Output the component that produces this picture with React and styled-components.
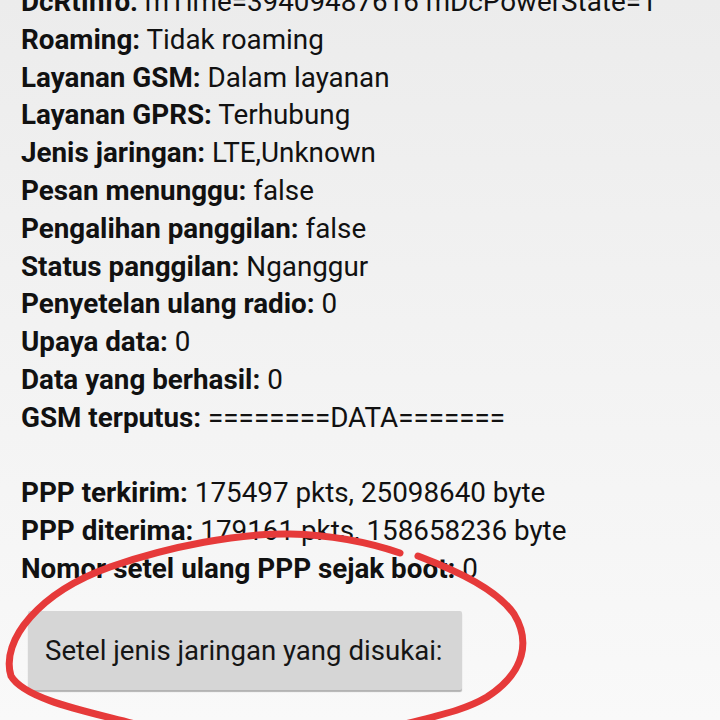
import styled, { createGlobalStyle } from "styled-components";

const GlobalStyle = createGlobalStyle`
  html, body {
    margin: 0;
    padding: 0;
  }
  body {
    width: 720px;
    height: 720px;
    overflow: hidden;
    background: linear-gradient(#ececec, #f4f4f4 60%, #f9f9f9);
    font-family: Roboto, "Noto Sans", sans-serif;
    color: #111;
  }
`;

const rows = [
  ["DcRtInfo:", "mTime=39409487616 mDcPowerState=1"],
  ["Roaming:", "Tidak roaming"],
  ["Layanan GSM:", "Dalam layanan"],
  ["Layanan GPRS:", "Terhubung"],
  ["Jenis jaringan:", "LTE,Unknown"],
  ["Pesan menunggu:", "false"],
  ["Pengalihan panggilan:", "false"],
  ["Status panggilan:", "Nganggur"],
  ["Penyetelan ulang radio:", "0"],
  ["Upaya data:", "0"],
  ["Data yang berhasil:", "0"],
  ["GSM terputus:", "========DATA======="],
  null,
  ["PPP terkirim:", "175497 pkts, 25098640 byte"],
  ["PPP diterima:", "179161 pkts, 158658236 byte"],
  ["Nomor setel ulang PPP sejak boot:", "0"],
];

const Page = styled.div`
  position: relative;
  width: 720px;
  height: 720px;
  overflow: hidden;
`;

const Info = styled.div`
  display: flex;
  flex-direction: column;
  padding-left: 21px;
  margin-top: -17px;
`;

const Row = styled.div`
  font-size: 27.8px;
  line-height: 37.8px;
  height: 37.8px;
  white-space: nowrap;
`;

const Label = styled.span`
  font-weight: 700;
`;

const Button = styled.button`
  display: flex;
  align-items: center;
  margin: 23px 0 0 28px;
  width: 434px;
  height: 79px;
  padding: 0 17px;
  border: none;
  border-radius: 2px;
  background: #d6d6d6;
  box-shadow: 0 2px 1px rgba(0, 0, 0, 0.28);
  font-family: Roboto, "Noto Sans", sans-serif;
  font-size: 27.6px;
  color: #151515;
  white-space: nowrap;
`;

const Scribble = styled.svg`
  position: absolute;
  left: 0;
  top: 0;
  pointer-events: none;
`;

export default function App() {
  return (
    <Page>
      <GlobalStyle />
      <Info>
        {rows.map((r, i) =>
          r ? (
            <Row key={i}>
              <Label>{r[0]}</Label> {r[1]}
            </Row>
          ) : (
            <Row key={i} />
          )
        )}
      </Info>
      <Button>Setel jenis jaringan yang disukai:</Button>
      <Scribble width="720" height="720" viewBox="0 0 720 720">
        <g fill="none" stroke="#e63a3a" strokeWidth="7" strokeLinecap="round">
          <path d="M 135 724 C 90 712 25 700 11 676 C 0 640 40 592 110 567 C 170 546 240 533 290 534 C 330 535 365 541 400 553" />
          <path d="M 418 556 C 460 572 497 590 514 614 C 530 640 526 672 487 697 C 465 710 440 715 405 724" />
        </g>
      </Scribble>
    </Page>
  );
}
